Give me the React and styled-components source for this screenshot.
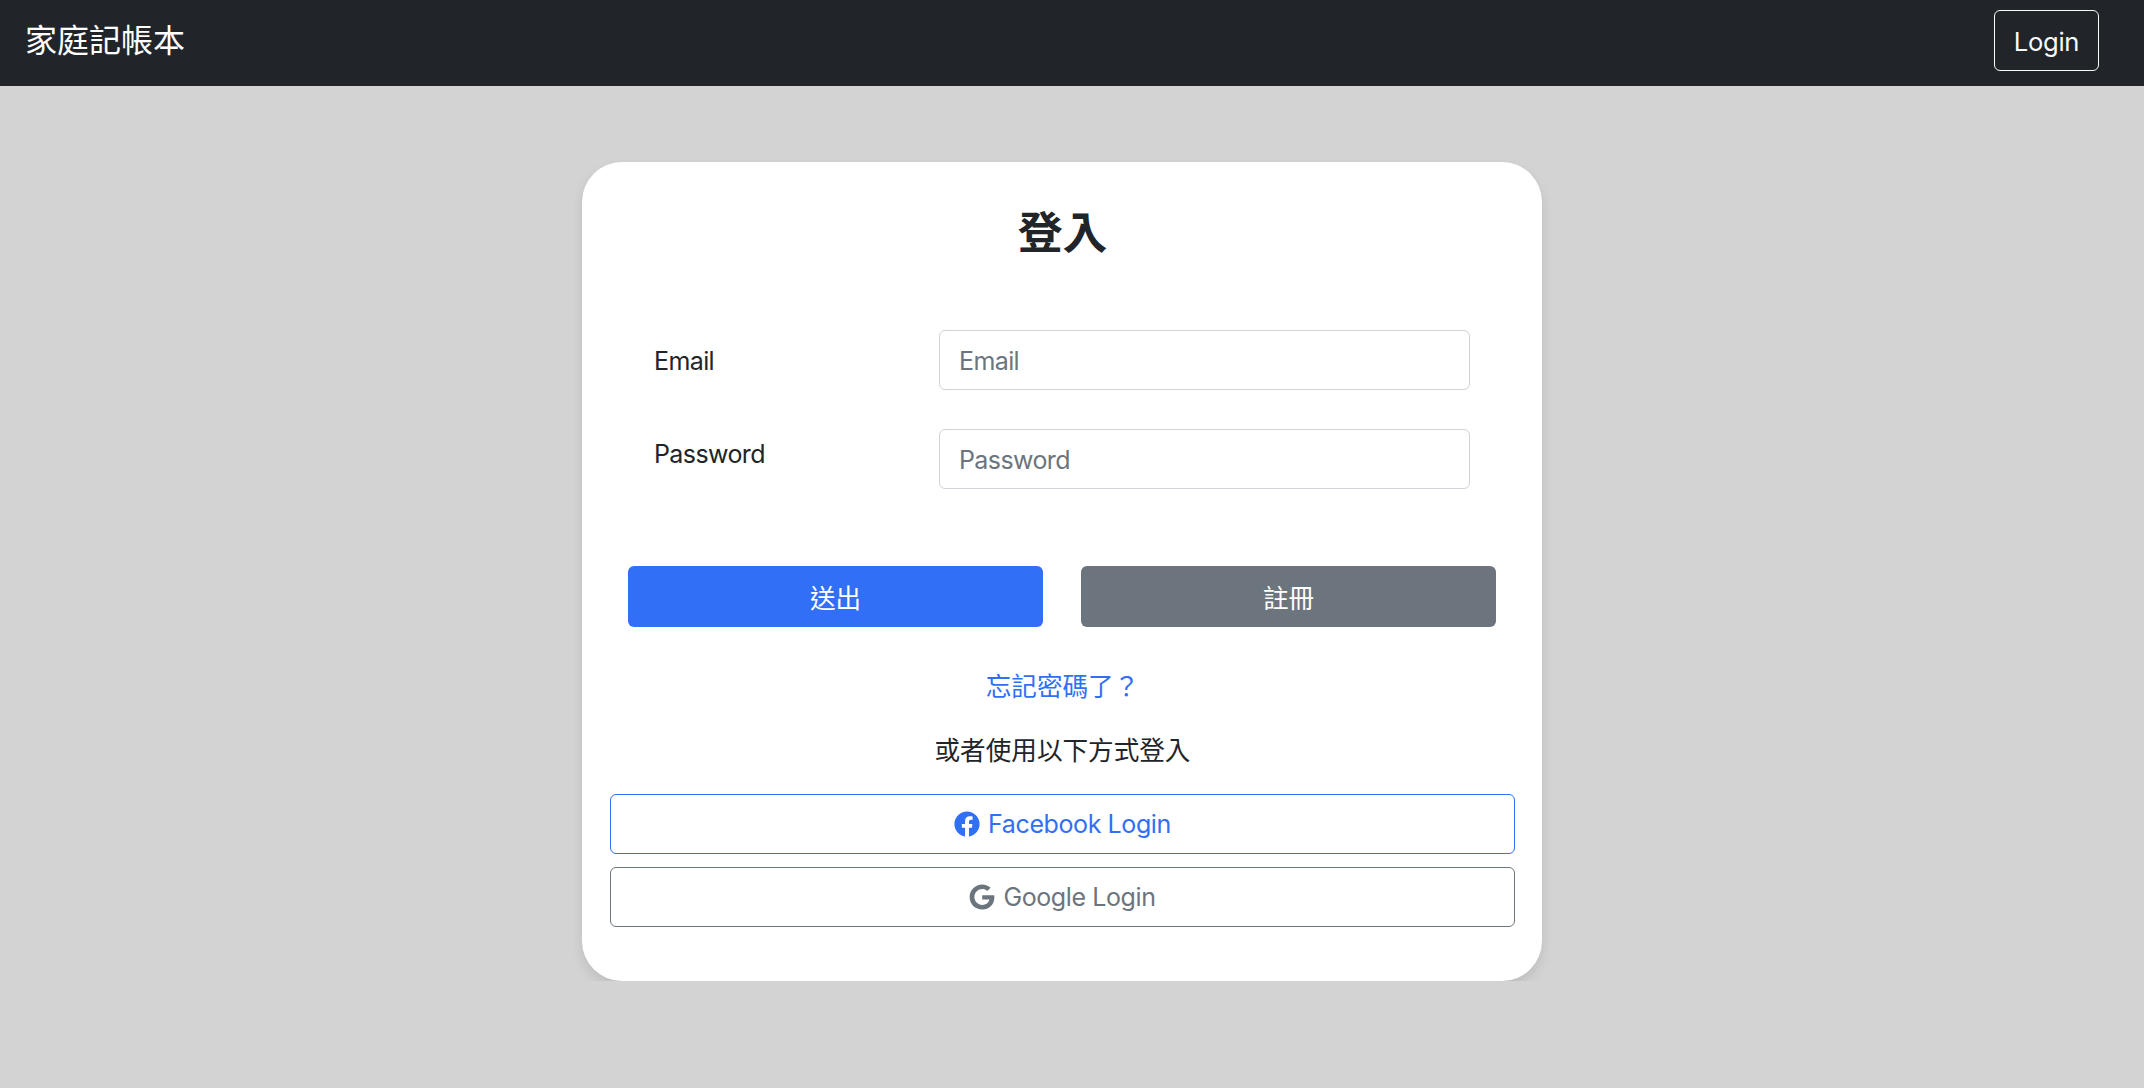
import React from 'react';
import styled, { createGlobalStyle } from 'styled-components';
import { FaFacebook, FaGoogle } from 'react-icons/fa';

const GlobalStyle = createGlobalStyle`
  html, body {
    margin: 0;
    min-height: 100%;
    background: #d3d3d3;
  }
  body {
    font-family: Inter, "Noto Sans CJK TC", sans-serif;
    font-size: 25.6px;
    line-height: 1.5;
    color: #212529;
  }
  * {
    box-sizing: border-box;
  }
`;

const Navbar = styled.nav`
  height: 86px;
  background: #212529;
  display: flex;
  align-items: flex-start;
  justify-content: space-between;
  padding: 10px 45px 0 25px;
`;

const Brand = styled.a`
  margin-top: 15px;
  color: #fff;
  font-size: 32px;
  line-height: 1;
  text-decoration: none;
`;

const NavButton = styled.button`
  height: 61px;
  width: 105px;
  padding: 3px 0 0;
  background: transparent;
  border: 1px solid #f8f9fa;
  border-radius: 6px;
  color: #f8f9fa;
  font: inherit;
  letter-spacing: -0.3px;
`;

const Page = styled.main`
  display: flex;
  justify-content: center;
  padding: 76px 20px 0 0;
`;

const Card = styled.section`
  width: 960px;
  height: 819px;
  padding: 44px 27px 0 28px;
  background: #fff;
  border-radius: 40px;
  box-shadow: 0 6px 12px rgba(0, 0, 0, 0.1);
`;

const Title = styled.h3`
  margin: 0 0 70px;
  font-size: 44.8px;
  font-weight: 700;
  line-height: 54px;
  text-align: center;
`;

const Fields = styled.div`
  display: flex;
  flex-direction: column;
  gap: 39px;
  padding: 0 45px 0 44px;
`;

const Row = styled.div`
  display: grid;
  grid-template-columns: 285px 1fr;
  align-items: center;
`;

const Label = styled.label`
  padding: ${(props) => (props.$raised ? '0 0 8px' : '3px 0 0')};
  font-size: 25px;
  letter-spacing: -0.6px;
`;

const Input = styled.input`
  display: block;
  width: 100%;
  height: 60px;
  padding: 2px 20px 0 19px;
  border: 1px solid #ced4da;
  border-radius: 6px;
  background: #fff;
  color: #212529;
  font: inherit;
  font-size: 25px;
  letter-spacing: -0.6px;

  &::placeholder {
    color: #6c757d;
    opacity: 1;
  }
`;

const Actions = styled.div`
  display: grid;
  grid-template-columns: 415px 415px;
  gap: 38px;
  margin-top: 77px;
  padding: 0 18px;
`;

const ActionButton = styled.button`
  height: 61px;
  padding: 6px 0 0;
  border: 0;
  border-radius: 6px;
  background: ${(props) => (props.$secondary ? '#6c757d' : '#316ff6')};
  color: #fff;
  font: inherit;
`;

const Forgot = styled.a`
  display: block;
  margin-top: 41px;
  color: #316ff6;
  text-align: center;
  text-decoration: none;
`;

const Hint = styled.p`
  margin: 26px 0 23px;
  text-align: center;
`;

const Socials = styled.div`
  display: flex;
  flex-direction: column;
  gap: 13px;
`;

const SocialButton = styled.button`
  display: flex;
  align-items: center;
  justify-content: center;
  gap: 8px;
  height: 60px;
  padding: 2px 0 0;
  background: #fff;
  border: 1px solid ${(props) => props.$color};
  border-radius: 6px;
  color: ${(props) => props.$color};
  font: inherit;
  font-size: 25px;
  letter-spacing: -0.4px;

  svg {
    width: 26px;
    height: 26px;
    margin-top: -2px;
  }
`;

export default function App() {
  return (
    <>
      <GlobalStyle />
      <Navbar>
        <Brand href="#">家庭記帳本</Brand>
        <NavButton>Login</NavButton>
      </Navbar>
      <Page>
        <Card>
          <Title>登入</Title>
          <Fields>
            <Row>
              <Label>Email</Label>
              <Input type="email" placeholder="Email" />
            </Row>
            <Row>
              <Label $raised>Password</Label>
              <Input type="password" placeholder="Password" />
            </Row>
          </Fields>
          <Actions>
            <ActionButton>送出</ActionButton>
            <ActionButton $secondary>註冊</ActionButton>
          </Actions>
          <Forgot href="#">忘記密碼了？</Forgot>
          <Hint>或者使用以下方式登入</Hint>
          <Socials>
            <SocialButton $color="#316ff6">
              <FaFacebook />
              Facebook Login
            </SocialButton>
            <SocialButton $color="#6c757d">
              <FaGoogle />
              Google Login
            </SocialButton>
          </Socials>
        </Card>
      </Page>
    </>
  );
}
